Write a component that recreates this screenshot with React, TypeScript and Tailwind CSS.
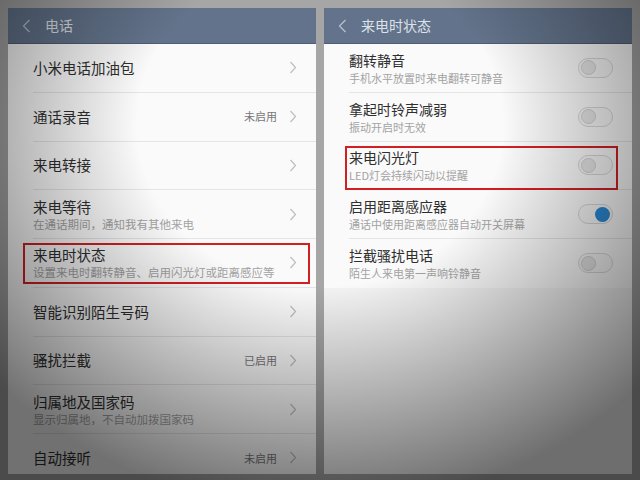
import React from 'react';

type Row = {
    title: string;
    sub?: string;
    status?: string;
    mark?: boolean;
};

type ToggleRow = {
    title: string;
    sub: string;
    on: boolean;
    mark?: boolean;
};

const phoneRows: Row[] = [
    { title: '小米电话加油包' },
    { title: '通话录音', status: '未启用' },
    { title: '来电转接' },
    { title: '来电等待', sub: '在通话期间，通知我有其他来电' },
    { title: '来电时状态', sub: '设置来电时翻转静音、启用闪光灯或距离感应等', mark: true },
    { title: '智能识别陌生号码' },
    { title: '骚扰拦截', status: '已启用' },
    { title: '归属地及国家码', sub: '显示归属地，不自动加拨国家码' },
    { title: '自动接听', status: '未启用' },
];

const stateRows: ToggleRow[] = [
    { title: '翻转静音', sub: '手机水平放置时来电翻转可静音', on: false },
    { title: '拿起时铃声减弱', sub: '振动开启时无效', on: false },
    { title: '来电闪光灯', sub: 'LED灯会持续闪动以提醒', on: false, mark: true },
    { title: '启用距离感应器', sub: '通话中使用距离感应器自动开关屏幕', on: true },
    { title: '拦截骚扰电话', sub: '陌生人来电第一声响铃静音', on: false },
];

function Chevron() {
    return (
        <svg width="8" height="13" viewBox="0 0 8 13" fill="none">
            <polyline points="1.5,1 6.5,6.5 1.5,12" stroke="#bdbdbd" strokeWidth="1.2" />
        </svg>
    );
}

function Header({ title }: { title: string }) {
    return (
        <div className="h-9 shrink-0 flex items-center bg-[#63738b] border-b border-[#4f5d70]">
            <svg className="ml-[14px]" width="9" height="14" viewBox="0 0 9 14" fill="none">
                <polyline points="7.5,1 1.5,7 7.5,13" stroke="#b9c2ce" strokeWidth="1.2" />
            </svg>
            <span className="ml-[14px] text-[14px] text-[#dde2e8]">{title}</span>
        </div>
    );
}

function Toggle({ on }: { on: boolean }) {
    return (
        <div className="w-[35px] h-[20px] rounded-full border border-[#d6d6d6] bg-[#f7f7f7] flex items-center px-[2px]">
            {on ? (
                <div className="ml-auto w-[15px] h-[15px] rounded-full bg-[#2a8ad4]" />
            ) : (
                <div className="w-[15px] h-[15px] rounded-full bg-[#e6e6e6] border border-[#cfcfcf]" />
            )}
        </div>
    );
}

export default function App() {
    return (
        <div
            className="relative w-[640px] h-[480px] overflow-hidden bg-[#a6a6a6] flex gap-2 px-2 pt-2"
            style={{ fontFamily: '"Noto Sans CJK SC", "Noto Sans", sans-serif' }}
        >
            {/* 电话 */}
            <div className="w-[308px] h-[466px] flex flex-col bg-[#fafafa]">
                <Header title="电话" />
                {phoneRows.map((row, i) => (
                    <div key={i} className="relative h-[48.75px] shrink-0">
                        <div className="ml-[25px] h-full border-b border-[#e4e4e4] flex items-center pr-[19px]">
                            <div className="flex-1 flex flex-col">
                                <span className="text-[14.5px] leading-[20px] text-[#2f2f2f]">{row.title}</span>
                                {row.sub && <span className="text-[11.5px] leading-[16px] -mt-[1px] text-[#a3a3a3]">{row.sub}</span>}
                            </div>
                            {row.status && <span className="mr-[12px] text-[11px] text-[#777]">{row.status}</span>}
                            <Chevron />
                        </div>
                        {row.mark && <div className="absolute left-[15px] right-[6px] top-[4px] bottom-[4px] border-2 border-[#d11f22]" />}
                    </div>
                ))}
            </div>

            {/* 来电时状态 */}
            <div className="w-[308px] h-[466px] flex flex-col bg-[#f3f3f3]">
                <Header title="来电时状态" />
                <div className="bg-[#fafafa]">
                    {stateRows.map((row, i) => (
                        <div key={i} className="relative h-[48.75px]">
                            <div className={`ml-[25px] h-full flex items-center pr-[19px] ${i < stateRows.length - 1 ? 'border-b border-[#e4e4e4]' : ''}`}>
                                <div className="flex-1 flex flex-col">
                                    <span className="text-[14px] leading-[20px] text-[#2f2f2f]">{row.title}</span>
                                    <span className="text-[11px] leading-[16px] text-[#a3a3a3]">{row.sub}</span>
                                </div>
                                <Toggle on={row.on} />
                            </div>
                            {row.mark && <div className="absolute left-[21px] right-[14px] top-[4px] bottom-0 border-2 border-[#d11f22]" />}
                        </div>
                    ))}
                </div>
            </div>

            {/* vignette */}
            <div className="pointer-events-none absolute inset-0 bg-[radial-gradient(ellipse_68%_80%_at_50%_26%,transparent_42%,rgba(0,0,0,0.55)_100%)]" />
        </div>
    );
}
